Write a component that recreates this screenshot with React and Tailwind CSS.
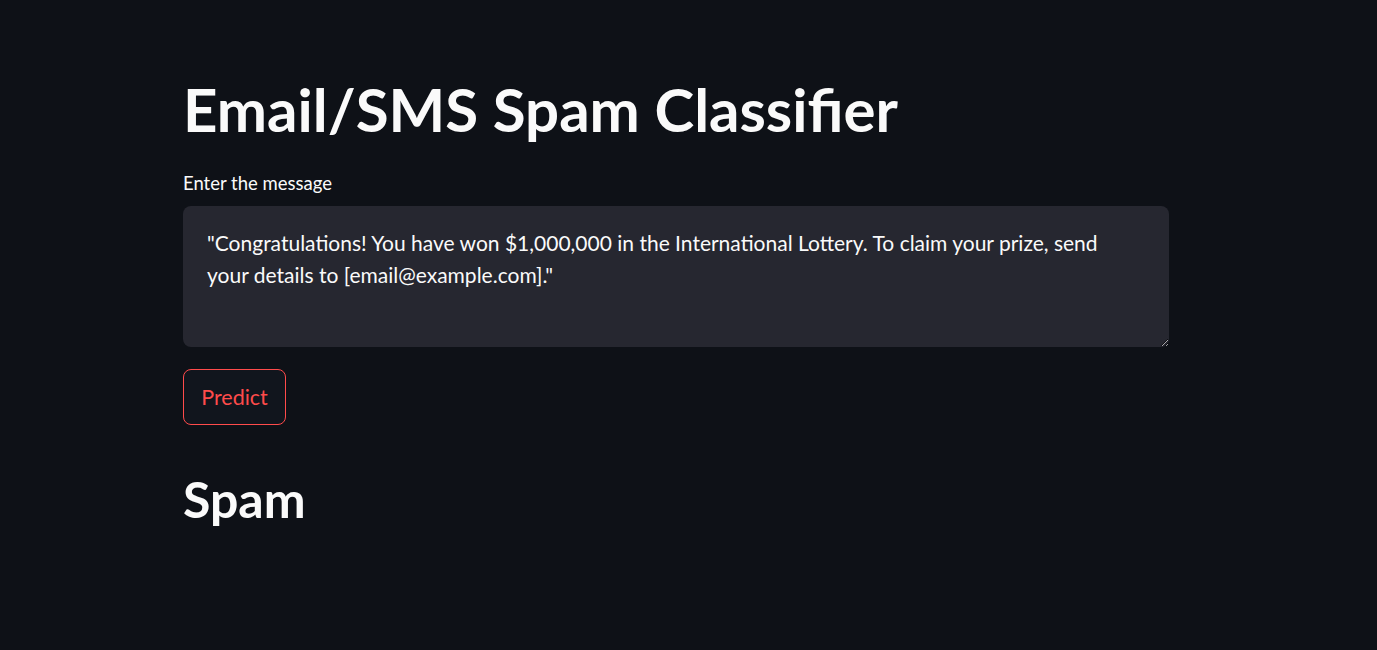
export default function App() {
  return (
    <div className="min-h-[650px] bg-[#0e1117] text-[#fafafa] font-['Lato','Noto_Sans',sans-serif]">
      <div className="w-[986px] ml-[183px] pt-[73px] flex flex-col">
        <h1 className="text-[60px] font-bold leading-[1.2]">
          Email/SMS Spam Classifier
        </h1>

        <label className="mt-[26px] text-[18.5px] leading-[24px]">Enter the message</label>
        <textarea
          className="mt-[11px] h-[141px] w-full resize-y rounded-lg bg-[#262730] pl-6 pr-10 py-[21px] text-[21px] leading-8 text-[#fafafa] outline-none"
          defaultValue={'"Congratulations! You have won $1,000,000 in the International Lottery. To claim your prize, send your details to [email@example.com]."'}
        />

        <div className="mt-[22px]">
          <button className="h-[56px] w-[103px] rounded-lg border border-[#ff4b4b] bg-[#11151d] text-[21.5px] text-[#ff4b4b]">
            Predict
          </button>
        </div>

        <h2 className="mt-[44px] text-[50px] font-bold leading-[1.2]">Spam</h2>
      </div>
    </div>
  );
}
